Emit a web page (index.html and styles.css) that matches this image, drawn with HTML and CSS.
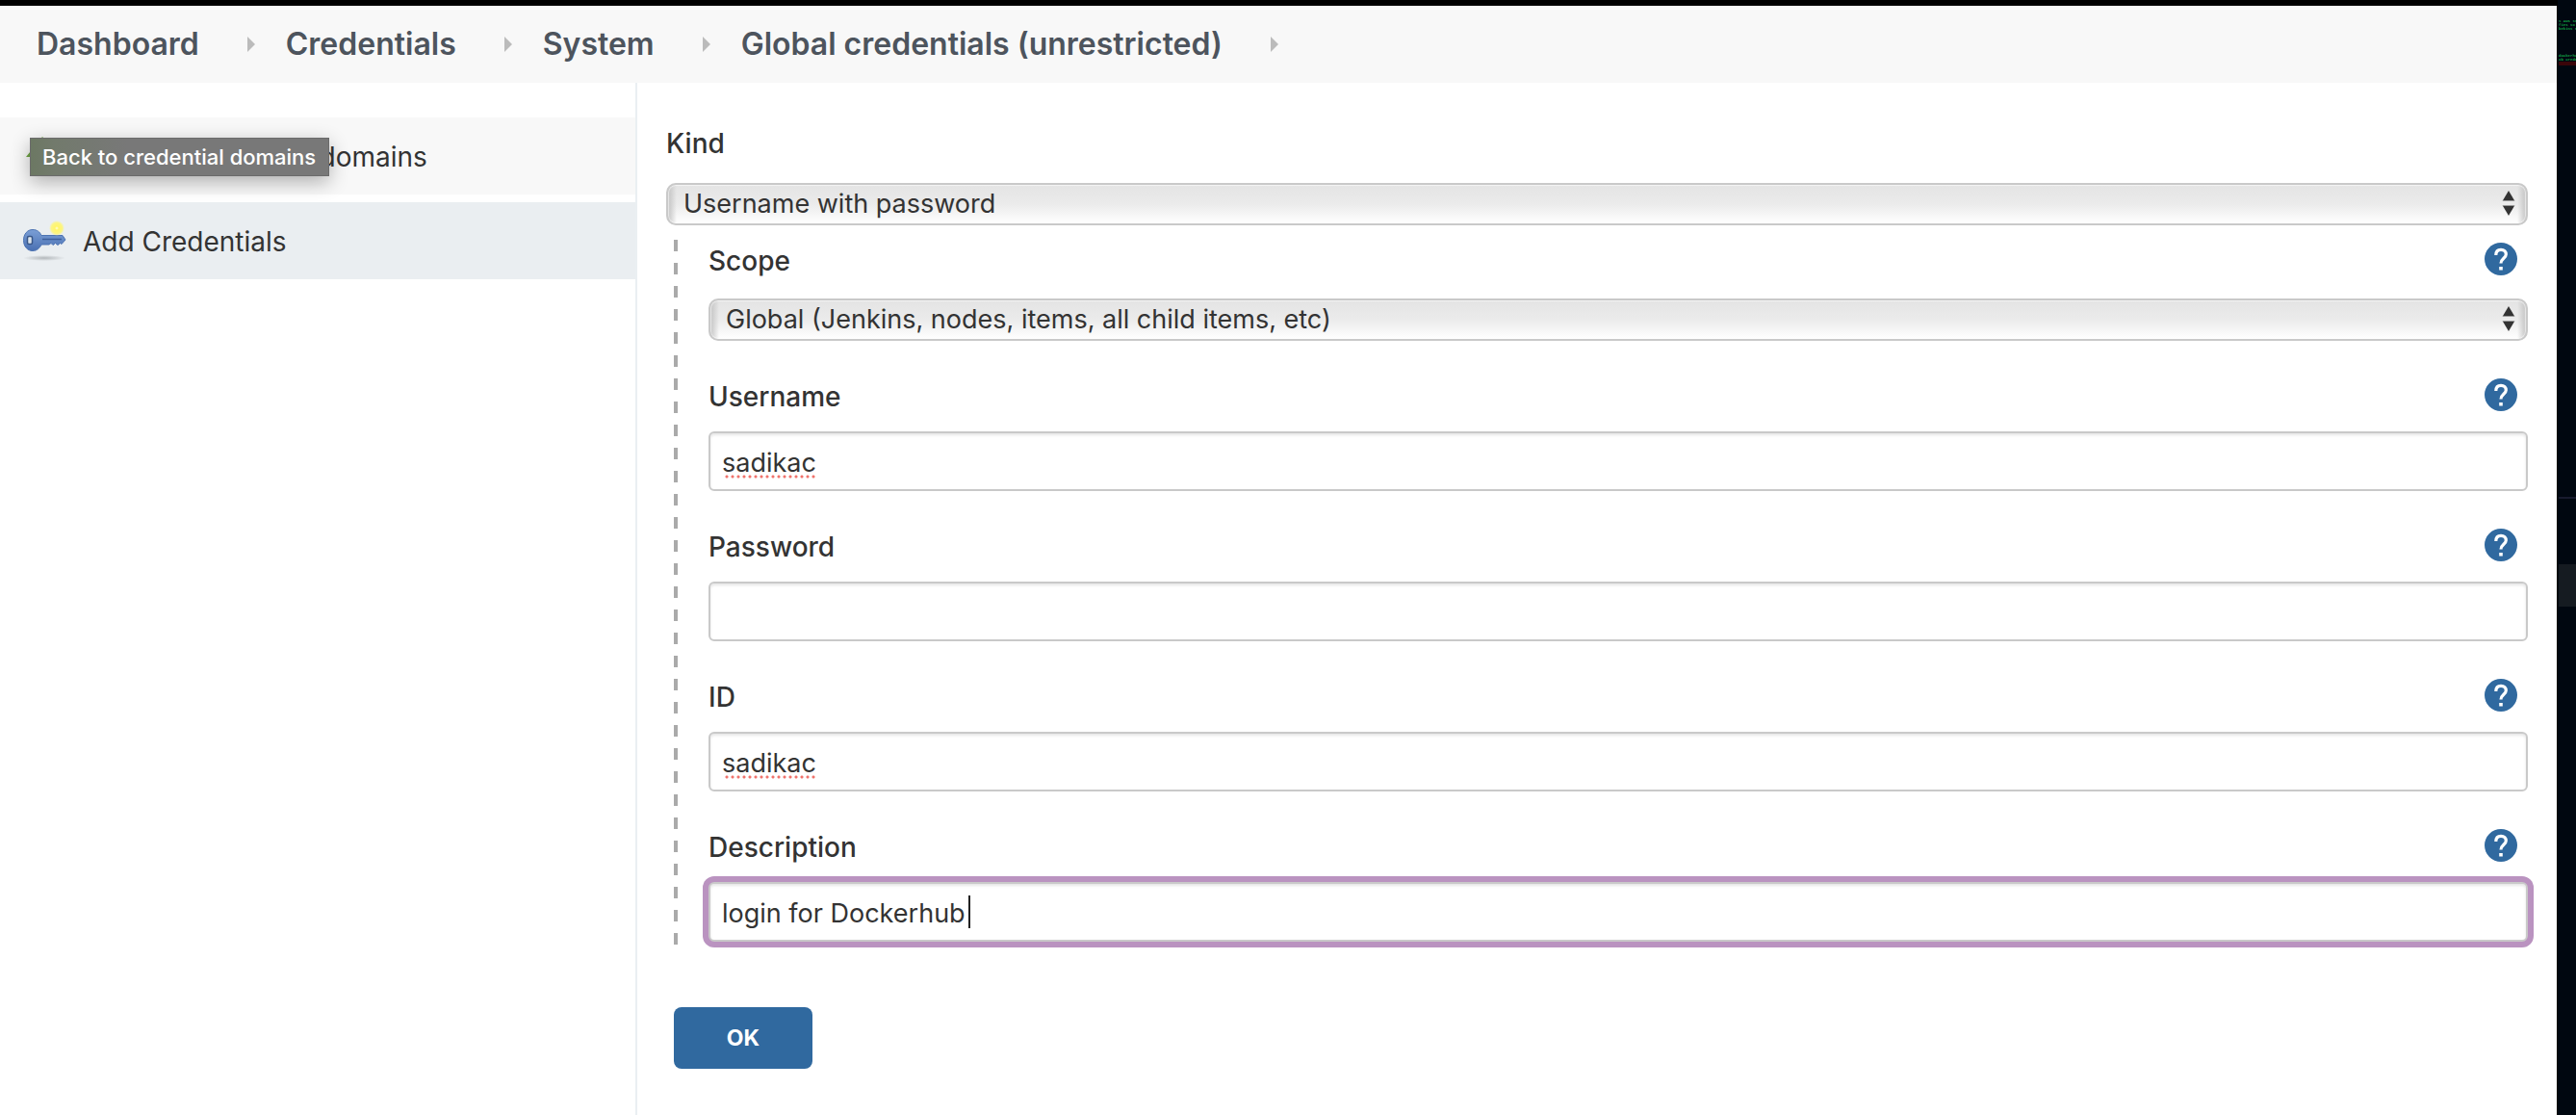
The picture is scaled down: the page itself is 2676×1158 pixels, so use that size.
FILE: index.html
```html
<!DOCTYPE html>
<html lang="en">
<head>
<meta charset="utf-8">
<title>Global credentials (unrestricted) [Jenkins]</title>
<link rel="stylesheet" href="styles.css">
</head>
<body>
<svg width="0" height="0" class="defs" aria-hidden="true">
  <symbol id="help" viewBox="0 0 34 34">
    <circle cx="17" cy="17" r="17" fill="#30699f"/>
    <path d="M11.800 13 C11.800 9.400 13.800 7.300 17 7.300 C20.400 7.300 22.300 9.400 22.300 12.200 C22.300 16.200 17 16.400 17 21.400" fill="none" stroke="#fff" stroke-width="3.200"/>
    <path d="M15.200 25h3.600v3.500h-3.600z" fill="#fff"/>
  </symbol>
  <symbol id="updown" viewBox="0 0 14 26">
    <path d="M7 0L13.200 10.500H.8z" fill="#333"/>
    <path d="M7 26L13.200 15.500H.8z" fill="#333"/>
    <path d="M.8 10.500h12.400M.8 15.500h12.400" stroke="#999" stroke-width="1"/>
  </symbol>
</svg>
<div class="screen">
  <div class="window">
    <nav class="breadcrumbs" aria-label="Breadcrumb">
      <a href="#">Dashboard</a><i class="arrow"></i>
      <a href="#">Credentials</a><i class="arrow"></i>
      <a href="#">System</a><i class="arrow"></i>
      <a href="#">Global credentials (unrestricted)</a><i class="arrow"></i>
    </nav>
    <div class="page">
      <aside class="side">
        <div class="task hover">
          <svg class="icon" viewBox="0 0 48 48" aria-hidden="true"><path d="M22 4L5 25H16V42H34V25H42z" fill="#6fa544"/></svg>
          <a href="#">Back to credential domains</a>
          <span class="tooltip" role="tooltip">Back to credential domains</span>
        </div>
        <div class="task active">
          <svg class="icon" viewBox="0 0 48 48" aria-hidden="true">
            <defs>
              <radialGradient id="shade"><stop offset="0" stop-color="#8d9296" stop-opacity=".6"/><stop offset="1" stop-color="#8d9296" stop-opacity="0"/></radialGradient>
              <radialGradient id="spark"><stop offset="0" stop-color="#fffde0"/><stop offset=".25" stop-color="#fff56a"/><stop offset=".7" stop-color="#fcf583"/><stop offset="1" stop-color="#fcf583" stop-opacity="0"/></radialGradient>
              <linearGradient id="metal" x2="0" y2="1"><stop offset="0" stop-color="#7b9fd6"/><stop offset="1" stop-color="#4a70b2"/></linearGradient>
            </defs>
            <ellipse cx="24" cy="42" rx="22" ry="3" fill="url(#shade)"/>
            <path d="M12 12.500C6.500 12.500 2.500 17 2.500 23.500S6.500 34.500 12 34.500C16.500 34.500 19.500 31.500 21 28H29L31 26.500L33 28.500L35.500 26.500L38 28.500L40.500 26.500L42 27.500L46 23L43 18.500H21C19.500 15 16.500 12.500 12 12.500z" fill="url(#metal)" stroke="#4e74b3"/>
            <path d="M22 22.500H42" stroke="#3f609d" stroke-width="1.500"/>
            <rect x="6.500" y="19.500" width="5" height="8" rx="1.500" fill="#dce4ec" stroke="#395789" stroke-width="1.500"/>
            <circle cx="37" cy="11" r="8" fill="url(#spark)"/>
          </svg>
          <a href="#">Add Credentials</a>
        </div>
      </aside>
      <main class="main">
        <form class="form">
          <div class="head"><label for="kind">Kind</label></div>
          <div class="select">
            <select id="kind"><option>Username with password</option></select>
            <svg class="updown" aria-hidden="true"><use href="#updown"/></svg>
          </div>
          <div class="nested">
            <div class="field">
              <div class="head"><label for="scope">Scope</label><button type="button" class="help" aria-label="Help for Scope"><svg><use href="#help"/></svg></button></div>
              <div class="select">
                <select id="scope"><option>Global (Jenkins, nodes, items, all child items, etc)</option></select>
                <svg class="updown" aria-hidden="true"><use href="#updown"/></svg>
              </div>
            </div>
            <div class="field">
              <div class="head"><label for="user">Username</label><button type="button" class="help" aria-label="Help for Username"><svg><use href="#help"/></svg></button></div>
              <div class="text"><input id="user" type="text" value="sadikac"><i class="misspelt"></i></div>
            </div>
            <div class="field">
              <div class="head"><label for="pass">Password</label><button type="button" class="help" aria-label="Help for Password"><svg><use href="#help"/></svg></button></div>
              <div class="text"><input id="pass" type="password"></div>
            </div>
            <div class="field">
              <div class="head"><label for="id">ID</label><button type="button" class="help" aria-label="Help for ID"><svg><use href="#help"/></svg></button></div>
              <div class="text"><input id="id" type="text" value="sadikac"><i class="misspelt"></i></div>
            </div>
            <div class="field">
              <div class="head"><label for="desc">Description</label><button type="button" class="help" aria-label="Help for Description"><svg><use href="#help"/></svg></button></div>
              <div class="text"><input id="desc" class="focused" type="text" value="login for Dockerhub"><i class="caret"></i></div>
            </div>
          </div>
          <button type="button" class="ok">OK</button>
        </form>
      </main>
    </div>
  </div>
  <div class="terminal" aria-hidden="true">
    <pre class="log">s AWS serv
fies so th
bekins re-</pre>
    <pre class="log second">dockerhub. I
ub credent</pre>
    <div class="alert"></div>
    <div class="rule"></div>
    <div class="block"></div>
  </div>
</div>
</body>
</html>
```
FILE: styles.css
```css
* { box-sizing: border-box; }
body {
  margin: 0;
  font-family: Inter, "Liberation Sans", sans-serif;
  font-size: 27px;
  line-height: 34px;
  color: #333;
  background: #000710;
}
a { color: inherit; text-decoration: none; }
.defs { position: absolute; }

.screen { display: flex; min-height: 100vh; }
.window {
  flex: 1;
  min-width: 0;
  display: flex;
  flex-direction: column;
  border-top: 6px solid #000;
  background: #fff;
}

.breadcrumbs {
  display: flex;
  align-items: center;
  height: 80px;
  padding-left: 38px;
  background: #f8f8f8;
  color: #4d545d;
  font-size: 32px;
  font-weight: 600;
}
.arrow {
  margin: 0 32px 0 50px;
  border: solid transparent;
  border-width: 8px 0 8px 8px;
  border-left-color: #bbb;
}

.page { flex: 1; display: flex; }
.side {
  flex: 0 0 662px;
  display: flex;
  flex-direction: column;
  gap: 8px;
  padding-top: 36px;
  border-right: 2px solid #eaeff2;
}
.task {
  position: relative;
  display: flex;
  align-items: center;
  gap: 16px;
  height: 80px;
  padding-left: 22px;
  font-size: 28px;
}
.task a { margin-top: 2px; }
.hover { background: #f8f8f8; }
.active { background: #eaeef1; }
.icon { width: 48px; height: 48px; }
.tooltip {
  position: absolute;
  left: 31px;
  top: 21px;
  padding: 2px 13px 2px 12px;
  border: 1px solid #8c8c8c;
  outline: 1px solid #6b6b6b;
  outline-offset: -1px;
  background: linear-gradient(90deg, #6c7863, #727a6c 24px, #787878 100px);
  box-shadow: 0 6px 20px rgba(0, 0, 0, .3);
  color: #fff;
  font-size: 22px;
  font-weight: 500;
  white-space: nowrap;
}

.main { flex: 1; min-width: 0; padding: 46px 30px 48px; }
.head {
  display: flex;
  align-items: center;
  justify-content: space-between;
  height: 34px;
  font-size: 28px;
  font-weight: 500;
}
.field label { margin-top: 4px; }
.help {
  width: 34px;
  height: 34px;
  margin-right: 11px;
  padding: 0;
  border: 0;
  background: none;
}
.help svg { display: block; width: 34px; height: 34px; }

.select { position: relative; margin-top: 24px; }
.select select {
  display: block;
  width: 100%;
  height: 44px;
  padding: 0 16px;
  appearance: none;
  border: 2px solid #c9c9c9;
  border-radius: 10px;
  background:
    linear-gradient(90deg, #c4c4c4, rgba(210, 210, 210, 0)) left / 9px 100% no-repeat,
    linear-gradient(270deg, #c4c4c4, rgba(210, 210, 210, 0)) right / 9px 100% no-repeat,
    linear-gradient(#e4e4e4, #ebebeb 50%, #fff);
  box-shadow: inset 0 0 1px 1px rgba(255, 255, 255, .6);
  font: inherit;
  color: inherit;
}
.updown {
  position: absolute;
  right: 13px;
  top: 8px;
  width: 14px;
  height: 26px;
  pointer-events: none;
}

.nested {
  display: flex;
  flex-direction: column;
  gap: 39px;
  margin: 15px 0 0 8px;
  padding: 3px 0 4px 36px;
  background: repeating-linear-gradient(#aaa 0 12px, transparent 12px 24px) 0 0 / 4px 100% no-repeat;
}
.text { position: relative; margin-top: 21px; }
.text input {
  display: block;
  width: 100%;
  height: 62px;
  padding: 2px 12px 0;
  border: 2px solid #c9c9c9;
  border-radius: 6px;
  background: #fff;
  box-shadow: inset 0 2px 3px rgba(0, 0, 0, .1);
  font: inherit;
  color: inherit;
}
.text .focused { box-shadow: 0 0 0 6px #ba93c0, inset 0 2px 3px rgba(0, 0, 0, .1); }
.misspelt {
  position: absolute;
  left: 16px;
  top: 45px;
  width: 96px;
  height: 4px;
  background: radial-gradient(circle, #f0736c 1px, transparent 2px) 0 0 / 6px 4px;
}
.caret {
  position: absolute;
  left: 270px;
  top: 14px;
  width: 2px;
  height: 34px;
  background: #222;
}

.ok {
  display: block;
  width: 144px;
  height: 64px;
  margin: 64px 0 0 8px;
  border: 0;
  border-radius: 8px;
  background: #30699f;
  color: #fff;
  font: 700 23px/34px Inter, "Liberation Sans", sans-serif;
}

.terminal {
  flex: 0 0 20px;
  overflow: hidden;
  padding: 20px 0 0 1px;
  border-left: 1px solid #000;
  background: #000710;
}
.log {
  margin: 0;
  color: #12a044;
  font: 700 4px/4px "Liberation Mono", monospace;
}
.second { margin-top: 24px; }
.alert { height: 4px; background: #3a0509; }
.rule { height: 2px; margin-top: 448px; background: #171b2e; }
.block { height: 44px; margin-top: 68px; background: #151b21; }
```
